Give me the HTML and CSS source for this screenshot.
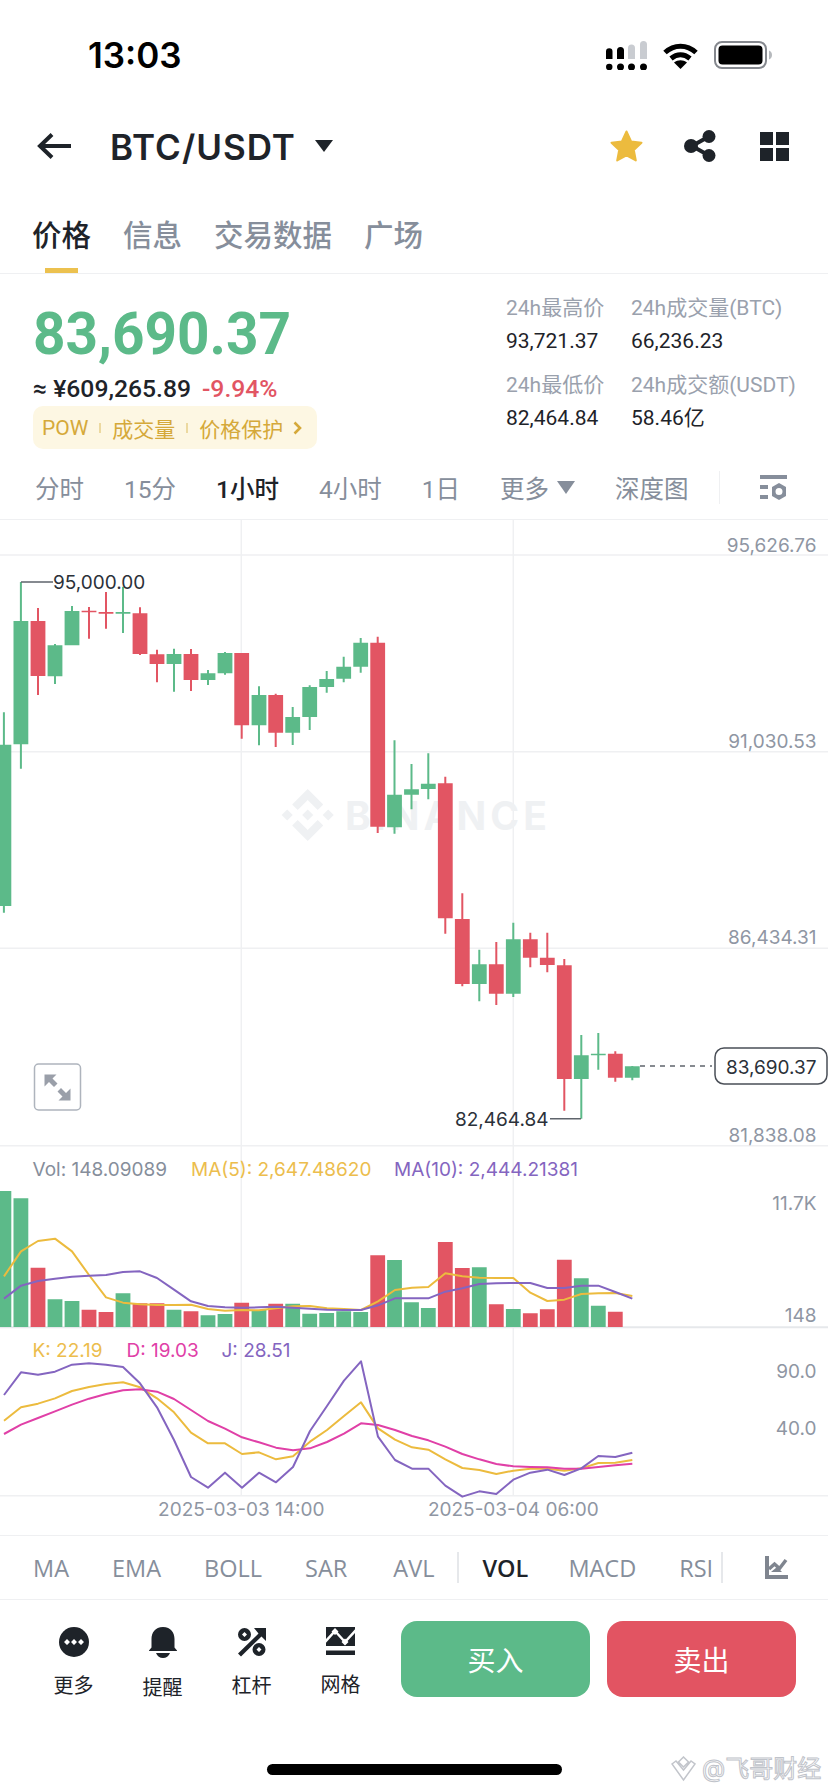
FILE: index.html
```html
<!DOCTYPE html>
<html lang="zh-CN">
<head>
    <meta charset="UTF-8">
    <meta name="viewport" content="width=device-width, initial-scale=1.0">
    <title>BTC/USDT</title>
    <link rel="stylesheet" href="styles.css">
</head>
<body>
    <div class="page">
        <div class="status-bar">
            <span class="clock">13:03</span>
            <div class="status-icons">
                <svg class="icon-signal" width="41" height="29" viewBox="0 0 41 29">
                    <path fill="#000" d="M0 10.500a3 3 0 0 1 6.500 0V18H0zM11 9.500a3.200 3.200 0 0 1 7 0V18h-7zM0 26a3 3 0 0 1 6.500 0 3 3 0 0 1-6.500 0zM11 26a3.200 3.200 0 0 1 7 0 3.200 3.200 0 0 1-7 0zM22 26a3.200 3.200 0 0 1 7 0 3.200 3.200 0 0 1-7 0zM34 26a3.200 3.200 0 0 1 7 0 3.200 3.200 0 0 1-7 0z"/>
                    <path fill="#c9ccd1" d="M22 7a3.500 3.500 0 0 1 7 0v11h-7zM34 3.500a3.500 3.500 0 0 1 7 0V18h-7z"/>
                </svg>
                <svg class="icon-wifi" width="35" height="27" viewBox="0 0 35 27">
                    <path fill="none" stroke="#000" stroke-width="5" d="M2 10.500C11 2 24 2 33 10.500M8 16.500c6-5 13-5 19 0"/>
                    <path fill="#000" d="M17.500 27l-6.500-6.500c4-3 9-3 13 0z"/>
                </svg>
                <svg class="icon-battery" width="58" height="28" viewBox="0 0 58 28">
                    <rect x="1" y="1" width="51" height="26" rx="7" fill="none" stroke="#85888e" stroke-width="2"/>
                    <rect x="4.500" y="4.500" width="44" height="19" rx="4" fill="#000"/>
                    <path fill="#b6b9bd" d="M55 9.500c2 .6 3 2.400 3 4.500s-1 3.900-3 4.500z"/>
                </svg>
            </div>
        </div>

        <header class="top-bar">
            <svg class="back-arrow" width="34" height="26" viewBox="0 0 34 26">
                <path fill="none" stroke="#1e2329" stroke-width="4" d="M34 13H3M15 1.500L3 13l12 11.500"/>
            </svg>
            <h1 class="pair">BTC/USDT</h1>
            <svg class="pair-caret" width="18" height="12" viewBox="0 0 18 12"><path fill="#1e2329" d="M0 0h18L9 12z"/></svg>
            <div class="top-actions">
                <svg class="star" width="33" height="32" viewBox="0 0 33 32">
                    <path fill="#ecbb3e" stroke="#ecbb3e" stroke-width="2" stroke-linejoin="round" d="M16.500 1.500l4.600 9.900 10.400 1.300-7.700 7.200 2 10.600-9.300-5.200-9.300 5.200 2-10.600-7.700-7.200 10.400-1.300z"/>
                </svg>
                <svg width="32" height="32" viewBox="0 0 32 32">
                    <path fill="none" stroke="#1e2329" stroke-width="4" d="M24 7L8 16l16 9"/>
                    <circle cx="25" cy="6.500" r="6.500" fill="#1e2329"/>
                    <circle cx="7" cy="16" r="7" fill="#1e2329"/>
                    <circle cx="25" cy="25.500" r="6.500" fill="#1e2329"/>
                </svg>
                <svg width="29" height="29" viewBox="0 0 29 29">
                    <path fill="#1e2329" d="M0 0h13v13H0zM16 0h13v13H16zM0 16h13v13H0zM16 16h13v13H16z"/>
                </svg>
            </div>
        </header>

        <nav class="tabs">
            <a class="tab tab-active">价格</a>
            <a class="tab">信息</a>
            <a class="tab">交易数据</a>
            <a class="tab">广场</a>
        </nav>

        <section class="summary">
            <div class="summary-left">
                <div class="last-price">83,690.37</div>
                <div class="fiat-line">
                    <span class="fiat">≈ ¥609,265.89</span>
                    <span class="change">-9.94%</span>
                </div>
                <div class="tags">
                    <span>POW</span><i></i><span>成交量</span><i></i><span>价格保护</span>
                    <svg width="9" height="14" viewBox="0 0 9 14"><path fill="none" stroke="#d5a93a" stroke-width="2.600" d="M1.500 1.500L7 7l-5.500 5.500"/></svg>
                </div>
            </div>
            <div class="stats">
                <div class="stat"><span class="stat-label">24h最高价</span><span class="stat-value">93,721.37</span></div>
                <div class="stat"><span class="stat-label">24h成交量(BTC)</span><span class="stat-value">66,236.23</span></div>
                <div class="stat"><span class="stat-label">24h最低价</span><span class="stat-value">82,464.84</span></div>
                <div class="stat"><span class="stat-label">24h成交额(USDT)</span><span class="stat-value">58.46亿</span></div>
            </div>
        </section>

        <div class="intervals">
            <span>分时</span>
            <span>15分</span>
            <span class="interval-active">1小时</span>
            <span>4小时</span>
            <span>1日</span>
            <span class="interval-more">更多<svg width="18" height="13" viewBox="0 0 18 13"><path fill="#868e9b" d="M0 0h18L9 13z"/></svg></span>
            <span>深度图</span>
            <i class="interval-sep"></i>
            <svg class="interval-settings" width="27" height="26" viewBox="0 0 27 26">
                <path fill="#868e9b" d="M0 0h27v4H0zM0 10h8v4H0zM0 20h8v4H0z"/>
                <path fill="#868e9b" fill-rule="evenodd" d="M19 8l7 4v9l-7 4-7-4v-9zM19 13a3.500 3.500 0 1 0 0 7 3.500 3.500 0 0 0 0-7z"/>
            </svg>
        </div>

        <!-- viewBox uses page coordinates, so y = 520 is the top of the chart -->
        <svg class="chart" width="828" height="1015" viewBox="0 520 828 1015">
            <path class="grid" d="M0 555H828M0 751.700H828M0 948.300H828M0 1145.700H828M0 1495.700H828M241.300 520V1496M513.300 520V1496"/>
            <path class="grid-strong" d="M0 1327.300H828"/>

            <!-- watermark -->
            <g class="watermark">
                <path d="M307.700 809.500l5.500 5.500-5.500 5.500-5.500-5.500zM287.200 809.500l5.500 5.500-5.500 5.500-5.500-5.500zM328.200 809.500l5.500 5.500-5.500 5.500-5.500-5.500z"/>
                <path d="M307.700 789l15.500 15.500-5.500 5.500-10-10-10 10-5.500-5.500zM307.700 841l15.500-15.500-5.500-5.500-10 10-10-10-5.500 5.500z"/>
                <text class="watermark-text" x="345" y="829.500">BINANCE</text>
            </g>

            <!-- candles -->
            <path class="wick-up" d="M3.900 712.300V912.700M20.900 582V768.700M55 644V684M72 606V611M123 586.700V633M174 648.700V691.700M208 670V685M225 652V674.700M259 686.300V745.300M292.700 707V745M309.700 685.300V730M326.700 671V692.700M343.700 656.700V682.300M360.700 638V672.700M394.500 740.300V833.700M411.500 764V809.300M428.300 753.300V799.300M479.300 949.700V1001.300M513.300 922.700V997M581.300 1035V1118.700M598.300 1033V1069.700M632.300 1066V1080.300"/>
            <path class="wick-down" d="M38 608V695M89 607V638.700M106 592V628.700M140 607.300V655M157 649.700V682.300M191 649V691M241.700 653V738.700M275.700 693.700V747M377.700 636.700V833M445.300 776.700V933.700M462.300 893.300V986.300M496.300 942V1005M530.300 932.700V967.300M547.300 932.700V972.300M564.300 959V1110.700M615.300 1051.300V1081.700"/>
            <path class="body-up" d="M-3.500 744.700h14.800V906h-14.800zM13.500 621h14.800V744.300h-14.800zM47.600 645.300h14.800V676.300h-14.800zM64.600 611h14.800V645.300h-14.800zM115.600 612h14.800V613.700h-14.800zM166.600 654h14.800V664h-14.800zM200.600 673.300h14.800V680h-14.800zM217.600 653h14.800V673.300h-14.800zM251.600 695h14.800V725.300h-14.800zM285.300 717h14.800V732.700h-14.800zM302.300 687h14.800V717h-14.800zM319.300 679h14.800V687h-14.800zM336.300 666.700h14.800V678.700h-14.800zM353.300 642.700h14.800V666.700h-14.800zM387.100 794.700h14.800V827.300h-14.800zM404.100 789.300h14.800V794.700h-14.800zM420.900 783.700h14.800V789h-14.800zM471.900 964.300h14.800V984h-14.800zM505.900 939.300h14.800V993.700h-14.800zM573.900 1055.300h14.800V1079h-14.800zM590.900 1053.700h14.800V1055.300h-14.800zM624.900 1066.300h14.800V1077.700h-14.800z"/>
            <path class="body-down" d="M30.600 621h14.800V676h-14.800zM81.600 610.700h14.800V612.300h-14.800zM98.600 612h14.800V613.700h-14.800zM132.600 613.300h14.800V654h-14.800zM149.600 654.300h14.800V664h-14.800zM183.600 654h14.800V680h-14.800zM234.300 653h14.800V725.300h-14.800zM268.300 695h14.800V732.700h-14.800zM370.300 642.700h14.800V826.700h-14.800zM437.900 783.300h14.800V918.300h-14.800zM454.900 919h14.800V984h-14.800zM488.900 964.300h14.800V993.700h-14.800zM522.900 939.300h14.800V957.700h-14.800zM539.900 957.700h14.800V965h-14.800zM556.900 965.300h14.800V1079h-14.800zM607.900 1053.700h14.800V1077.700h-14.800z"/>

            <!-- high, low and last price -->
            <path class="leader" d="M21 582H53M550 1118.700H581"/>
            <path class="leader-dash" d="M640 1066H712"/>
            <text class="mark" x="53" y="589">95,000.00</text>
            <text class="mark" x="548.500" y="1126" text-anchor="end">82,464.84</text>
            <rect class="price-tag" x="715" y="1048" width="112" height="36" rx="9"/>
            <text class="mark" x="816.500" y="1074" text-anchor="end">83,690.37</text>

            <!-- expand button -->
            <rect class="expand-box" x="34.500" y="1064" width="46" height="46" rx="4"/>
            <path class="expand-arrows" d="M44.500 1074.500h12l-4 4 5 5-3.500 3.500-5-5-4.500 4.500zM70.500 1100.500h-12l4-4-5-5 3.500-3.500 5 5 4.500-4.500z"/>

            <!-- volume -->
            <path class="body-up" d="M-3.500 1191h14.800V1327h-14.800zM13.500 1198.300h14.800V1327h-14.800zM47.600 1299.300h14.800V1327h-14.800zM64.600 1301h14.800V1327h-14.800zM115.600 1293.300h14.800V1327h-14.800zM166.600 1309.700h14.800V1327h-14.800zM200.600 1315.300h14.800V1327h-14.800zM217.600 1314h14.800V1327h-14.800zM251.600 1310h14.800V1327h-14.800zM285.300 1303.700h14.800V1327h-14.800zM302.300 1313.700h14.800V1327h-14.800zM319.300 1313h14.800V1327h-14.800zM336.300 1311.300h14.800V1327h-14.800zM353.300 1312h14.800V1327h-14.800zM387.100 1260h14.800V1327h-14.800zM404.100 1302.300h14.800V1327h-14.800zM420.900 1308h14.800V1327h-14.800zM471.900 1267.300h14.800V1327h-14.800zM505.900 1309h14.800V1327h-14.800zM573.900 1278.300h14.800V1327h-14.800zM590.900 1305.700h14.800V1327h-14.800z"/>
            <path class="body-down" d="M30.600 1267.700h14.800V1327h-14.800zM81.600 1309.700h14.800V1327h-14.800zM98.600 1312h14.800V1327h-14.800zM132.600 1303.300h14.800V1327h-14.800zM149.600 1303.300h14.800V1327h-14.800zM183.600 1311.300h14.800V1327h-14.800zM234.300 1302.700h14.800V1327h-14.800zM268.300 1303.700h14.800V1327h-14.800zM370.300 1255.300h14.800V1327h-14.800zM437.900 1242h14.800V1327h-14.800zM454.900 1268h14.800V1327h-14.800zM488.900 1304.300h14.800V1327h-14.800zM522.900 1313.300h14.800V1327h-14.800zM539.900 1309.300h14.800V1327h-14.800zM556.900 1259.700h14.800V1327h-14.800zM607.900 1311.700h14.800V1327h-14.800z"/>

            <!-- lines are plotted at 3x -->
            <g transform="translate(0 1140) scale(.33333)">
                <polyline class="line line-yellow" points="12,409 63,334 114,303 165,296 216,334 267,405 318,472 369,488 420,493 471,495 522,495 573,494 624,507 675,512 726,510 777,511 828,505 879,499 930,498 981,505 1032,507 1083,510 1134,484 1185,450 1236,443 1285,441 1336,400 1387,409 1438,413 1489,414 1540,414 1591,458 1642,483 1693,479 1744,462 1795,460 1846,459 1897,468"/>
                <polyline class="line line-purple" points="12,476 63,437 114,423 165,416 216,410 267,407 318,405 369,396 420,394 471,414 522,449 573,484 624,498 675,502 726,503 777,502 828,500 879,503 930,506 981,509 1032,510 1083,510 1134,496 1185,475 1236,475 1285,475 1336,455 1387,445 1438,432 1489,430 1540,429 1591,429 1642,444 1693,444 1744,437 1795,437 1846,456 1897,476"/>
            </g>
            <g transform="translate(0 1330) scale(.33333)">
                <polyline class="line line-yellow" points="12,272 63,232 114,221 165,205 216,183 267,171 318,162 369,157 420,172 471,205 522,247 573,308 624,340 675,340 726,372 777,367 828,388 879,379 930,335 981,300 1032,258 1083,217 1134,295 1185,329 1236,352 1285,359 1336,388 1387,414 1438,420 1489,432 1540,422 1591,416 1642,416 1693,422 1744,415 1795,399 1846,398 1897,390"/>
                <polyline class="line line-pink" points="12,312 63,284 114,264 165,244 216,224 267,206 318,192 369,181 420,178 471,185 522,207 573,240 624,273 675,296 726,322 777,337 828,353 879,361 930,355 981,336 1032,311 1083,280 1134,285 1185,300 1236,318 1285,331 1336,350 1387,372 1438,388 1489,402 1540,409 1591,411 1642,412 1693,416 1744,416 1795,411 1846,406 1897,401"/>
                <polyline class="line line-purple" points="12,195 63,127 114,134 165,125 216,104 267,100 318,104 369,111 420,160 471,232 522,330 573,441 624,473 675,428 726,473 777,428 828,457 879,411 930,303 981,228 1032,152 1083,94 1134,320 1185,390 1236,416 1285,416 1336,467 1387,500 1438,484 1489,492 1540,449 1591,428 1642,419 1693,435 1744,415 1795,378 1846,381 1897,368"/>
            </g>

            <!-- legends -->
            <text class="legend legend-gray" x="32.500" y="1176">Vol: 148.09089</text>
            <text class="legend legend-yellow" x="191" y="1176">MA(5): 2,647.48620</text>
            <text class="legend legend-purple" x="394" y="1176">MA(10): 2,444.21381</text>
            <text class="legend legend-yellow" x="32.500" y="1356.500">K: 22.19</text>
            <text class="legend legend-pink" x="126.500" y="1356.500">D: 19.03</text>
            <text class="legend legend-purple" x="221.500" y="1356.500">J: 28.51</text>

            <!-- axis labels -->
            <g class="axis" text-anchor="end">
                <text x="816.500" y="551.500">95,626.76</text>
                <text x="816.500" y="748.300">91,030.53</text>
                <text x="816.500" y="944.300">86,434.31</text>
                <text x="816.500" y="1141.700">81,838.08</text>
                <text x="816.500" y="1210">11.7K</text>
                <text x="816.500" y="1322.300">148</text>
                <text x="816.500" y="1377.700">90.0</text>
                <text x="816.500" y="1435.300">40.0</text>
            </g>
            <g class="axis" text-anchor="middle">
                <text x="241.300" y="1516">2025-03-03 14:00</text>
                <text x="513.300" y="1516">2025-03-04 06:00</text>
            </g>
        </svg>

        <div class="indicators">
            <div class="indicator-list">
                <span>MA</span>
                <span>EMA</span>
                <span>BOLL</span>
                <span>SAR</span>
                <span class="indicator-avl">AVL</span>
                <i class="indicator-sep"></i>
                <span class="indicator-active">VOL</span>
                <span>MACD</span>
                <span>RSI</span>
            </div>
            <i class="indicator-end"></i>
            <svg class="indicator-icon" width="23" height="23" viewBox="0 0 23 23">
                <path fill="#7f858f" d="M0 0h4v19h19v4H0z"/>
                <path fill="none" stroke="#7f858f" stroke-width="3.500" d="M4 13l5.500-5 5 4.500L21 4"/>
                <path fill="#7f858f" d="M6 16l6-5 5 5z"/>
            </svg>
        </div>

        <footer class="actions">
            <div class="action">
                <svg width="30" height="30" viewBox="0 0 30 30">
                    <circle cx="15" cy="15" r="15" fill="#1e2329"/>
                    <path fill="#fff" d="M8 12l3 3-3 3-3-3zM15 12l3 3-3 3-3-3zM22 12l3 3-3 3-3-3z"/>
                </svg>
                <span>更多</span>
            </div>
            <div class="action">
                <svg width="30" height="32" viewBox="0 0 30 32">
                    <path fill="#1e2329" d="M15 0c8 0 11.500 6 11.500 12v8.500l2.500 3V24H1v-.500l2.500-3V12C3.500 6 7 0 15 0zM8 26h14c-1 3-4 5-7 5s-6-2-7-5z"/>
                </svg>
                <span>提醒</span>
            </div>
            <div class="action">
                <svg width="30" height="30" viewBox="0 0 30 30">
                    <path fill="#1e2329" fill-rule="evenodd" d="M29 1v13l-4.500-4.500L4 29.500 1 26.500l20.500-20L17 1zM7.500 1a6.500 6.500 0 1 1 0 13 6.500 6.500 0 0 1 0-13zM7.500 5L5 7.500 7.500 10 10 7.500zM22 16a6.500 6.500 0 1 1 0 13 6.500 6.500 0 0 1 0-13zM22 20l-2.500 2.500L22 25l2.500-2.500z"/>
                </svg>
                <span>杠杆</span>
            </div>
            <div class="action">
                <svg width="29" height="29" viewBox="0 0 29 29">
                    <path fill="#1e2329" d="M0 0h29v19H0zM0 23.500h29V28H0z"/>
                    <path fill="none" stroke="#fff" stroke-width="2.500" d="M-1 15L9 4l10 11L30 3"/>
                    <path fill="#fff" d="M9 1l3.500 3.500L9 8 5.500 4.500zM19 11.500l3.500 3.500-3.500 3.500-3.500-3.500z"/>
                </svg>
                <span>网格</span>
            </div>
            <div class="trade-buttons">
                <button class="btn btn-buy">买入</button>
                <button class="btn btn-sell">卖出</button>
            </div>
        </footer>

        <div class="home-bar"></div>

        <div class="credit">
            <svg width="27" height="26" viewBox="0 0 27 26">
                <path fill="none" stroke="#c2c5cb" stroke-width="1.500" d="M13.500 1l5 5-5 5-5-5zM2 8l4-3 7.500 9L21 5l4 3-11.500 16z"/>
            </svg>
            <span>@飞哥财经</span>
        </div>
    </div>
</body>
</html>
```
FILE: styles.css
```css
* {
    box-sizing: border-box;
    margin: 0;
    padding: 0;
}

body {
    font-family: 'Inter', 'Noto Sans CJK SC', sans-serif;
    background-color: #fff;
    color: #1e2329;
}

.page {
    position: relative;
    width: 828px;
    height: 1792px;
    overflow: hidden;
    display: flex;
    flex-direction: column;
}

svg {
    display: block;
    flex-shrink: 0;
}

i {
    display: block;
    font-style: normal;
}

/* Status bar */
.status-bar {
    height: 110px;
    display: flex;
    align-items: center;
    justify-content: space-between;
    padding: 0 56px 0 88px;
}

.clock {
    font-family: 'Inter', sans-serif;
    font-size: 35px;
    font-weight: 600;
    color: #000;
}

.status-icons {
    display: flex;
    align-items: center;
    gap: 16px;
}

/* Title row */
.top-bar {
    height: 72px;
    display: flex;
    align-items: center;
    padding: 0 39px 0 37px;
}

.pair {
    margin: 3px 0 0 39px;
    font-family: 'Inter', sans-serif;
    font-size: 35px;
    font-weight: 600;
    letter-spacing: 1px;
    line-height: 1;
}

.pair-caret {
    margin-left: 19px;
}

.top-actions {
    margin-left: auto;
    display: flex;
    align-items: center;
    gap: 44px;
}

.star {
    margin-right: -3px;
}

/* Page tabs */
.tabs {
    height: 92px;
    display: flex;
    gap: 32px;
    padding: 33px 0 0 32px;
    border-bottom: 1px solid #eff0f2;
}

.tab {
    position: relative;
    font-size: 29.500px;
    font-weight: 500;
    line-height: 40px;
    height: 40px;
    color: #868e9b;
}

.tab-active {
    color: #1e2329;
}

.tab-active::after {
    content: '';
    position: absolute;
    left: 13px;
    bottom: -18px;
    width: 33px;
    height: 5px;
    background-color: #ecc14f;
}

/* Price block */
.summary {
    height: 182px;
    display: flex;
    justify-content: space-between;
    padding: 0 0 0 33px;
}

.last-price {
    margin-top: 25px;
    font-family: 'Roboto', sans-serif;
    font-size: 60px;
    font-weight: 700;
    line-height: 70px;
    color: #5cba89;
    transform: scaleX(.945);
    transform-origin: left center;
    white-space: nowrap;
}

.fiat-line {
    margin-top: 6px;
    font-family: 'Roboto', sans-serif;
    font-size: 24.700px;
    font-weight: 500;
    line-height: 28px;
    display: flex;
    gap: 11px;
    white-space: nowrap;
}

.change {
    color: #e25563;
}

.tags {
    margin-top: 3px;
    width: 284px;
    height: 43px;
    display: flex;
    align-items: center;
    padding-left: 9px;
    font-family: 'Roboto', 'Noto Sans CJK SC', sans-serif;
    font-size: 21px;
    color: #d5a93a;
    background-color: #fdf7e3;
    border-radius: 10px;
}

.tags i {
    width: 2px;
    height: 10px;
    margin: 0 11px;
    background-color: #ecd9a0;
}

.tags svg {
    margin-left: 10px;
}

.stats {
    width: 322px;
    display: grid;
    grid-template-columns: 125px 1fr;
    grid-auto-rows: 77px;
    padding-top: 20px;
}

.stat {
    display: flex;
    flex-direction: column;
    gap: 4px;
    white-space: nowrap;
}

.stat-label,
.stat-value {
    font-family: 'Roboto', 'Noto Sans CJK SC', sans-serif;
    line-height: 29px;
}

.stat-label {
    font-size: 21px;
    color: #9aa1ad;
}

.stat-value {
    font-size: 21px;
    color: #1e2329;
}

/* Interval row */
.intervals {
    height: 64px;
    display: flex;
    align-items: center;
    gap: 40px;
    padding-left: 35px;
    font-family: 'Roboto', 'Noto Sans CJK SC', sans-serif;
    font-size: 24.500px;
    color: #868e9b;
    border-bottom: 1px solid #eff0f2;
}

.interval-active {
    color: #1e2329;
    font-weight: 500;
}

.interval-more {
    display: flex;
    align-items: center;
    gap: 8px;
}

.interval-sep {
    width: 1px;
    height: 33px;
    margin-left: -10px;
    background-color: #eff0f2;
}

/* Chart */
.chart {
    height: 1015px;
}

.grid {
    fill: none;
    stroke: #eff0f2;
    stroke-width: 1.500;
}

.grid-strong {
    fill: none;
    stroke: #e6e8eb;
    stroke-width: 2;
}

.watermark {
    fill: #eff1f3;
}

.watermark-text {
    font-family: 'Inter', sans-serif;
    font-size: 39px;
    font-weight: 700;
    letter-spacing: 4px;
}

.wick-up,
.wick-down {
    fill: none;
    stroke-width: 2;
}

.wick-up {
    stroke: #5cba89;
}

.wick-down {
    stroke: #e25563;
}

.body-up {
    fill: #5cba89;
}

.body-down {
    fill: #e25563;
}

.leader {
    fill: none;
    stroke: #5f646c;
    stroke-width: 1.500;
}

.leader-dash {
    fill: none;
    stroke: #5f646c;
    stroke-width: 1.500;
    stroke-dasharray: 5 5;
}

.mark {
    font-size: 19px;
    fill: #2b3139;
}

.price-tag {
    fill: #fff;
    stroke: #4a4f57;
    stroke-width: 1.500;
}

.expand-box {
    fill: #fff;
    stroke: #aeb4bd;
    stroke-width: 1.500;
}

.expand-arrows {
    fill: #9a9fa9;
}

.line {
    fill: none;
    stroke-width: 6;
    stroke-linejoin: round;
}

.line-yellow {
    stroke: #ecbb3e;
}

.line-purple {
    stroke: #8465c0;
}

.line-pink {
    stroke: #e040a7;
}

.legend {
    font-size: 19px;
}

.legend-gray {
    fill: #868e9b;
}

.legend-yellow {
    fill: #ecbd4d;
}

.legend-purple {
    fill: #8465c0;
}

.legend-pink {
    fill: #e040a7;
}

.axis {
    font-size: 19px;
    fill: #8f96a3;
}

/* Indicator row */
.indicators {
    height: 65px;
    display: flex;
    align-items: center;
    border-top: 1px solid #eff0f2;
    border-bottom: 1px solid #eff0f2;
}

.indicator-list {
    display: flex;
    align-items: center;
    gap: 43px;
    padding-left: 33px;
    font-family: 'Open Sans', sans-serif;
    font-size: 23.500px;
    color: #868e9b;
    white-space: nowrap;
}

.indicator-avl {
    margin-left: 3px;
}

.indicator-sep,
.indicator-end {
    flex-shrink: 0;
    width: 2px;
    height: 31px;
    background-color: #e6e8eb;
}

.indicator-sep {
    margin: 0 -20px;
}

.indicator-end {
    margin-left: 8px;
}

.indicator-active {
    color: #1e2329;
    font-weight: 600;
    margin-right: -3px;
}

.indicator-icon {
    margin-left: 42px;
}

/* Bottom actions */
.actions {
    display: flex;
    padding: 21px 0 0 29px;
}

.action {
    width: 89px;
    display: flex;
    flex-direction: column;
    align-items: center;
    gap: 15px;
    padding-top: 6px;
    font-size: 20px;
    line-height: 28px;
    color: #1e2329;
}

.trade-buttons {
    margin-left: 16px;
    display: flex;
    gap: 17px;
}

.btn {
    height: 76px;
    border: none;
    border-radius: 16px;
    font-family: 'Noto Sans CJK SC', sans-serif;
    font-size: 28px;
    color: #fff;
}

.btn-buy {
    width: 189px;
    background-color: #5cba89;
}

.btn-sell {
    width: 189px;
    background-color: #e25462;
}

.home-bar {
    position: absolute;
    left: 267px;
    top: 1764px;
    width: 295px;
    height: 11px;
    border-radius: 6px;
    background-color: #000;
}

.credit {
    position: absolute;
    left: 670px;
    top: 1755px;
    display: flex;
    align-items: center;
    gap: 5px;
    font-size: 24px;
    line-height: 28px;
    color: #fff;
    -webkit-text-stroke: 1px #bfc3ca;
    white-space: nowrap;
}
```
